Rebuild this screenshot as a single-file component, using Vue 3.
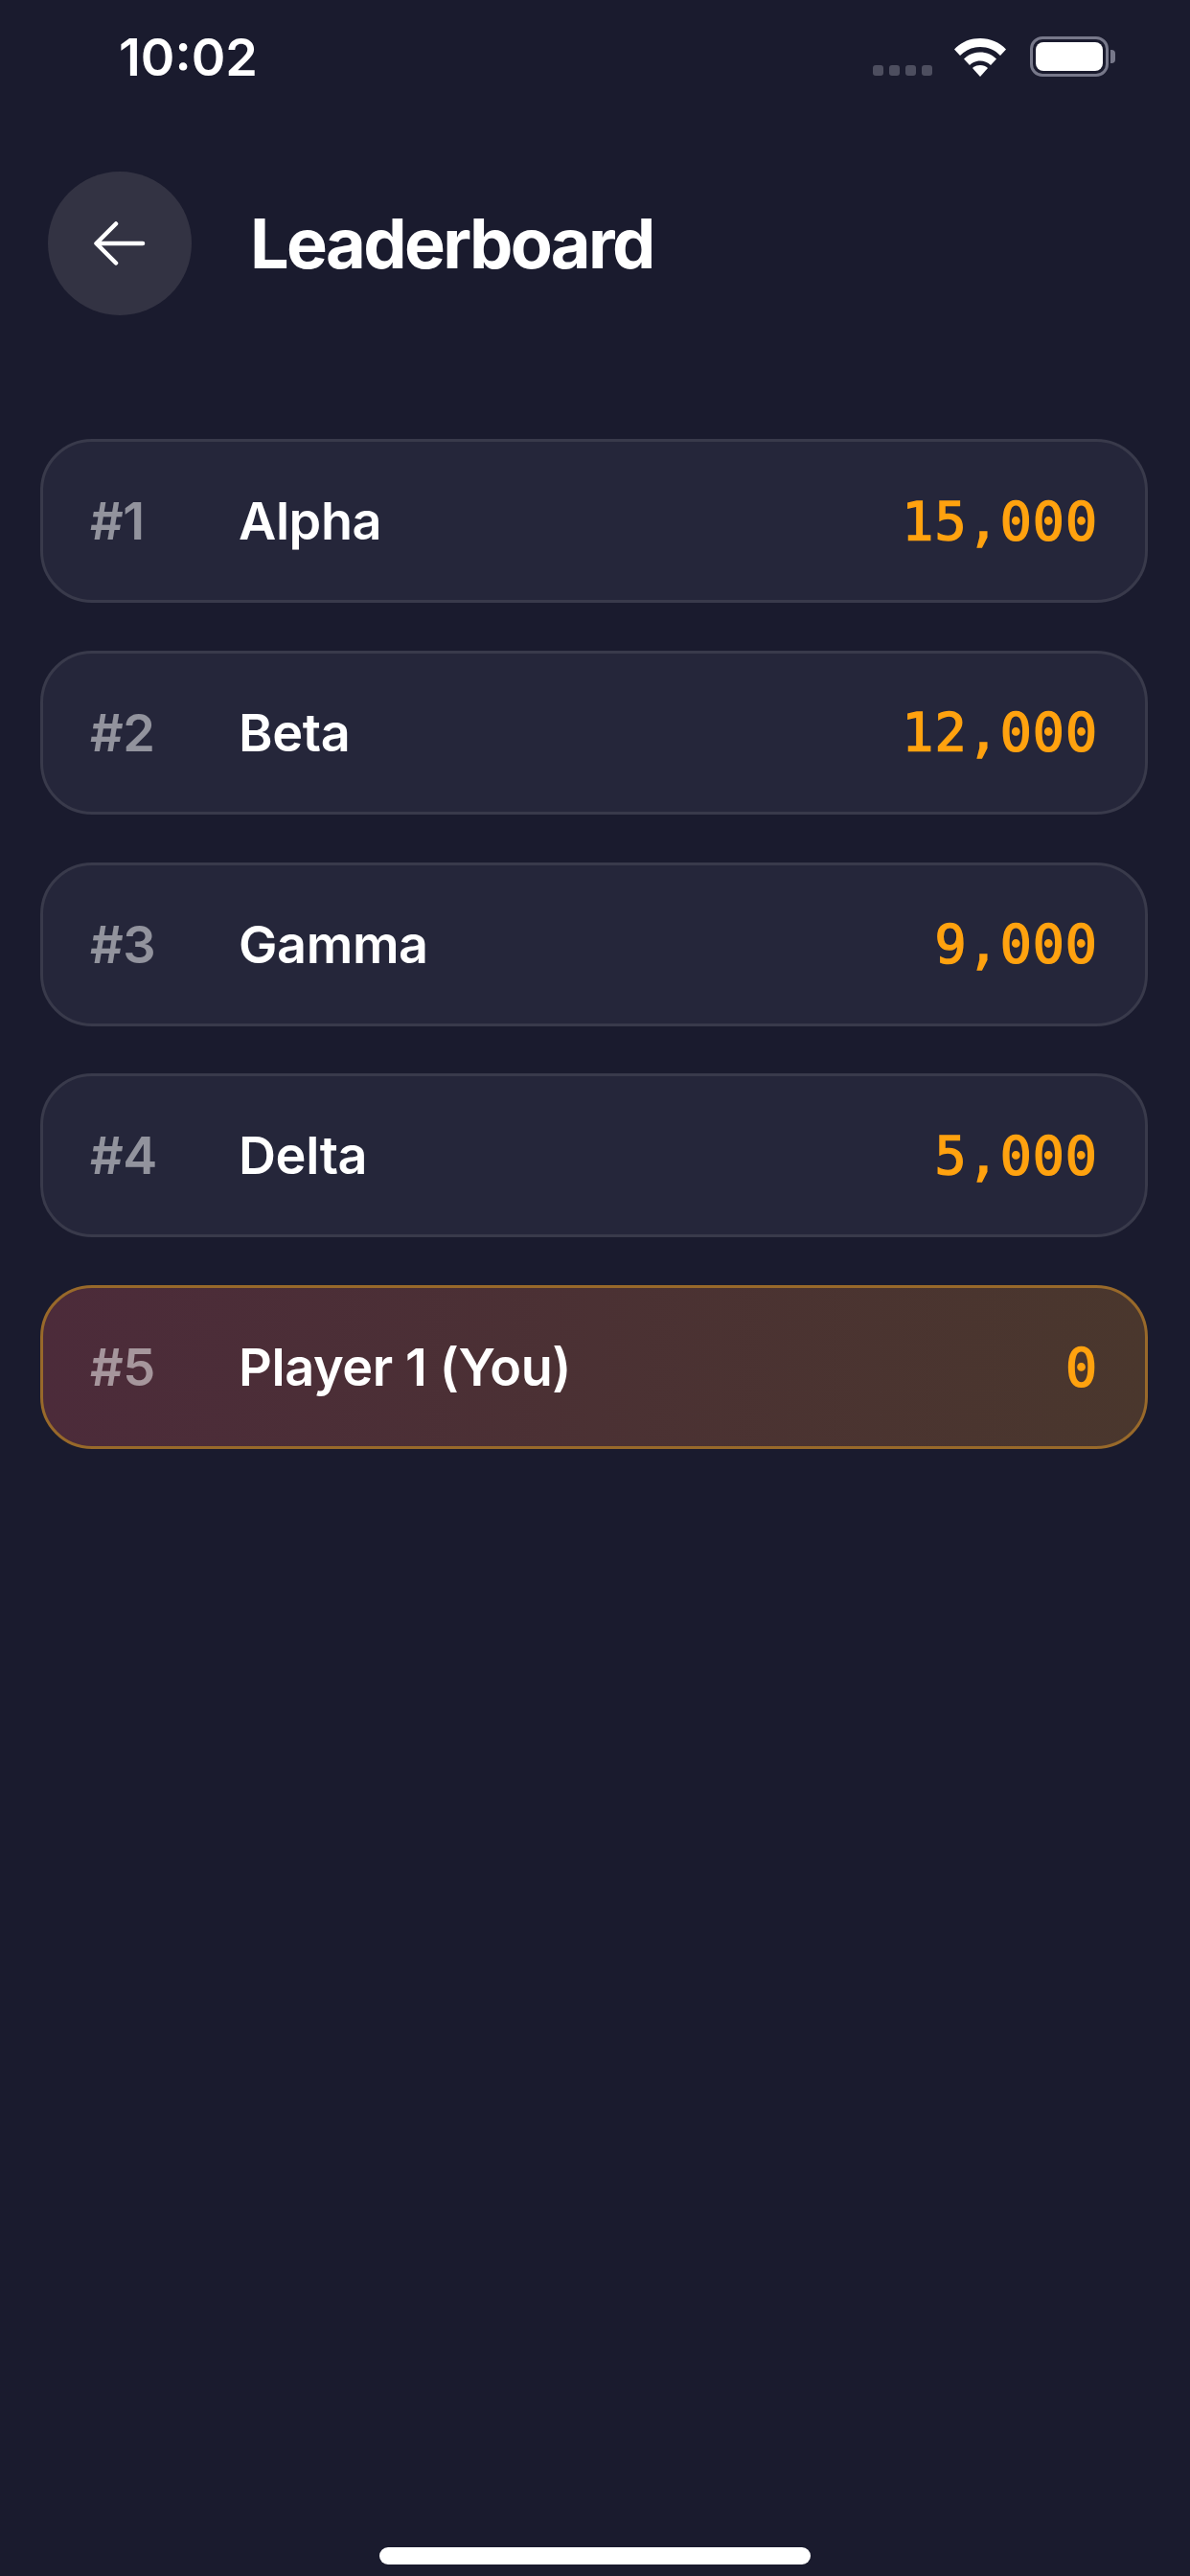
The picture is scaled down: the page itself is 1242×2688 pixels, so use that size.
<template>
  <div class="screen">
    <!-- Status bar -->
    <div class="status-bar">
      <span class="time">10:02</span>
      <div class="status-icons">
        <div class="signal">
          <span v-for="n in 4" :key="n" class="dot"></span>
        </div>
        <svg class="wifi" width="56" height="42" viewBox="0 0 56 42">
          <path d="M1 13.500C8 6 17.500 2 28 2s20 4 27 11.500l-6 6.500C43.500 14 36 11 28 11S12.500 14 7 20z" fill="#fff" />
          <path d="M11 23.500C15.500 19 21.500 16.500 28 16.500s12.500 2.500 17 7l-6 6.500c-3-2.800-6.800-4.500-11-4.500S20 27.200 17 30z" fill="#fff" />
          <path d="M20 33c2-2 5-3 8-3s6 1 8 3l-8 9z" fill="#fff" />
        </svg>
        <div class="battery">
          <div class="battery-body"><div class="battery-fill"></div></div>
          <div class="battery-nub"></div>
        </div>
      </div>
    </div>

    <!-- Header -->
    <header class="header">
      <button class="back-btn">
        <svg width="56" height="48" viewBox="0 0 56 48" fill="none" stroke="#fff" stroke-width="4.500" stroke-linecap="round" stroke-linejoin="round">
          <path d="M52 24H4M24 3.500 3.500 24 24 44.500" />
        </svg>
      </button>
      <h1 class="title">Leaderboard</h1>
    </header>

    <!-- Classement -->
    <div class="list">
      <div v-for="row in rows" :key="row.rank" class="row" :class="{ 'row-me': row.me }">
        <span class="rank">#{{ row.rank }}</span>
        <span class="name">{{ row.name }}</span>
        <span class="score">{{ row.score }}</span>
      </div>
    </div>

    <div class="home-indicator"></div>
  </div>
</template>

<script setup>
const rows = [
  { rank: 1, name: "Alpha", score: "15,000" },
  { rank: 2, name: "Beta", score: "12,000" },
  { rank: 3, name: "Gamma", score: "9,000" },
  { rank: 4, name: "Delta", score: "5,000" },
  { rank: 5, name: "Player 1 (You)", score: "0", me: true }
];
</script>

<style>
body {
  background: #1a1b2e;
}
</style>

<style scoped>
.screen {
  display: flex;
  flex-direction: column;
  width: 1242px;
  height: 2688px;
  background: #1a1b2e;
  color: #fff;
  font-family: Inter, "Liberation Sans", sans-serif;
  overflow: hidden;
}

/* Status bar */
.status-bar {
  display: flex;
  align-items: flex-start;
  justify-content: space-between;
  height: 132px;
  padding: 28px 78px 0 124px;
  box-sizing: border-box;
}

.time {
  font-size: 54px;
  font-weight: 600;
  line-height: 64px;
}

.status-icons {
  display: flex;
  align-items: flex-end;
  padding-top: 10px;
}

.signal {
  display: flex;
  gap: 6px;
  margin-right: 22px;
  margin-bottom: 1px;
}

.dot {
  width: 11px;
  height: 11px;
  border-radius: 3px;
  background: #4d4e5f;
}

.wifi {
  display: block;
  margin-right: 24px;
}

.battery {
  display: flex;
  align-items: center;
}

.battery-body {
  width: 82px;
  height: 42px;
  box-sizing: border-box;
  padding: 3px;
  border: 3px solid #77788a;
  border-radius: 13px;
}

.battery-fill {
  width: 100%;
  height: 100%;
  border-radius: 8px;
  background: #fff;
}

.battery-nub {
  width: 5px;
  height: 14px;
  margin-left: 2px;
  border-radius: 0 4px 4px 0;
  background: #77788a;
}

/* Header */
.header {
  display: flex;
  align-items: center;
  gap: 61px;
  margin-top: 47px;
  padding-left: 50px;
}

.back-btn {
  display: flex;
  align-items: center;
  justify-content: center;
  width: 150px;
  height: 150px;
  padding: 0;
  border: none;
  border-radius: 50%;
  background: #333343;
}

.title {
  margin: 0;
  font-size: 72px;
  font-weight: 700;
  line-height: 1;
  letter-spacing: -2.650px;
}

/* Liste */
.list {
  display: flex;
  flex-direction: column;
  gap: 49.750px;
  margin-top: 129px;
  padding: 0 44px 0 42px;
}

.row {
  display: flex;
  align-items: center;
  height: 171px;
  box-sizing: border-box;
  padding: 0 49px 0 49px;
  border: 3px solid #393a4b;
  border-radius: 54px;
  background: #25263a;
}

.row-me {
  border-color: #98692a;
  background: linear-gradient(90deg, #4c2b3a, #4a372d);
}

.rank {
  width: 155px;
  font-size: 54px;
  font-weight: 600;
  letter-spacing: -0.400px;
  color: rgba(255, 255, 255, 0.5);
}

.name {
  flex: 1;
  font-size: 54px;
  font-weight: 600;
  letter-spacing: -0.400px;
}

.score {
  font-family: "DejaVu Sans Mono", monospace;
  font-size: 55px;
  font-weight: 400;
  letter-spacing: 1px;
  -webkit-text-stroke: 1.500px #ffa20f;
  color: #ffa20f;
}

.home-indicator {
  align-self: center;
  width: 450px;
  height: 18px;
  margin-top: auto;
  margin-bottom: 12px;
  border-radius: 9px;
  background: #fff;
}
</style>
